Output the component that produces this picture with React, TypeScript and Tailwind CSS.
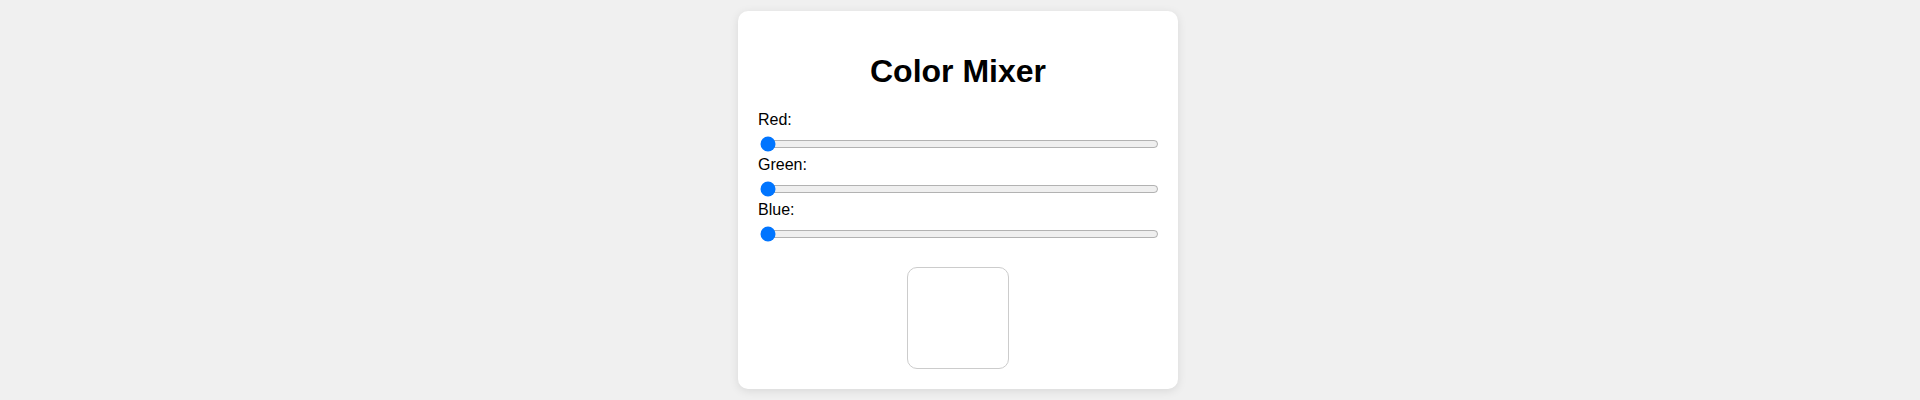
import { useState } from 'react';

const channels = ['Red', 'Green', 'Blue'] as const;

export default function App() {
  const [rgb, setRgb] = useState<Record<string, number>>({ Red: 0, Green: 0, Blue: 0 });

  return (
    <div className="flex h-[400px] items-center justify-center bg-[#f0f0f0] font-['Liberation_Sans',Arial,sans-serif] text-black">
      <div className="mr-[4px] w-[440px] rounded-[10px] bg-white p-5 shadow-[0_2px_10px_rgba(0,0,0,0.1)]">
        <h1 className="my-[21.44px] text-center text-[32px] leading-[36.8px] font-bold">Color Mixer</h1>

        {channels.map(name => (
          <div key={name}>
            <label className="block text-base leading-[18.4px]">{name}:</label>
            <input
              type="range"
              min={0}
              max={255}
              value={rgb[name]}
              onChange={e => setRgb(v => ({ ...v, [name]: Number(e.target.value) }))}
              className="mt-[6px] mb-[4.6px] ml-[2px] block h-4 w-[399px]"
            />
          </div>
        ))}

        <div className="mx-auto mt-[25px] h-[102px] w-[102px] rounded-[10px] border border-[#ccc] bg-white" />
      </div>
    </div>
  );
}
